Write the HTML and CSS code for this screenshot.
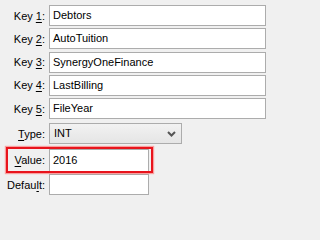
FILE: index.html
```html
<!DOCTYPE html>
<html>
<head>
<meta charset="utf-8">
<link rel="stylesheet" href="styles.css">
</head>
<body>
<div class="form">
  <label class="lbl">Key <u>1</u>:</label><div class="field wide">Debtors</div>
  <label class="lbl">Key <u>2</u>:</label><div class="field wide">AutoTuition</div>
  <label class="lbl">Key <u>3</u>:</label><div class="field wide">SynergyOneFinance</div>
  <label class="lbl">Key <u>4</u>:</label><div class="field wide">LastBilling</div>
  <label class="lbl">Key <u>5</u>:</label><div class="field wide">FileYear</div>
  <label class="lbl sel-lbl"><u>T</u>ype:</label>
  <div class="select"><span>INT</span>
    <svg class="chev" width="9" height="6" viewBox="0 0 9 6"><path d="M1 1 L4.5 4.5 L8 1" fill="none" stroke="#555" stroke-width="2"/></svg>
  </div>
  <label class="lbl val-lbl"><u>V</u>alue:</label><div class="field short val">2016</div>
  <label class="lbl def-lbl">Defau<u>l</u>t:</label><div class="field short def"></div>
</div>
<div class="highlight"></div>
</body>
</html>
```
FILE: styles.css
```css
html, body {
  margin: 0;
  padding: 0;
  background: #f0f0f0;
  width: 271px;
  height: 202px;
  overflow: hidden;
  position: relative;
  font-family: "Liberation Sans", Arial, sans-serif;
  font-size: 11px;
  color: #000;
}
.form {
  display: grid;
  grid-template-columns: 45px 217px;
  column-gap: 4px;
  row-gap: 2.3px;
  padding-top: 5px;
  align-items: center;
}
.lbl {
  text-align: right;
  white-space: nowrap;
}
.lbl u {
  text-decoration-thickness: 1px;
  text-underline-offset: 2px;
}
.field {
  box-sizing: border-box;
  height: 21px;
  border: 1px solid #acacac;
  background: #fff;
  padding: 0 0 0 3px;
  line-height: 19px;
  white-space: nowrap;
  overflow: hidden;
}
.short { width: 100px; }
.select {
  box-sizing: border-box;
  width: 133px;
  height: 21px;
  margin-top: 2px;
  border: 1px solid #acacac;
  background: linear-gradient(#f2f2f2, #e5e5e5);
  padding-left: 4px;
  line-height: 19px;
  display: flex;
  justify-content: space-between;
  align-items: center;
}
.sel-lbl { margin-top: 2px; }
.chev { margin-right: 5px; }
.val { height: 23px; line-height: 21px; margin-top: 2px; }
.val-lbl { margin-top: 2px; }
.def { margin-top: 0; }
.highlight {
  position: absolute;
  left: 6px;
  top: 147px;
  width: 147px;
  height: 26px;
  box-sizing: border-box;
  border: 2px solid #e8141c;
  box-shadow: 0 0 1px 1px rgba(255, 80, 80, 0.5);
}
```
